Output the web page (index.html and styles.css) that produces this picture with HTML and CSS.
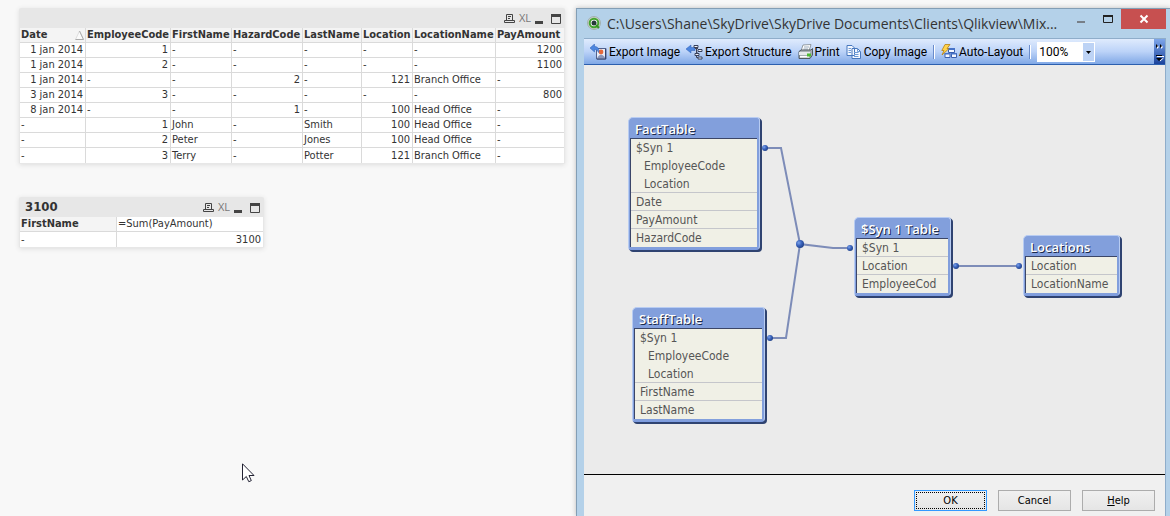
FILE: index.html
```
<!DOCTYPE html>
<html lang="en">
<head>
<meta charset="utf-8">
<title>Table Viewer</title>
<link rel="stylesheet" href="styles.css">
</head>
<body>
<svg class="defs" aria-hidden="true">
  <symbol id="print-small" viewBox="0 0 11 11"><path d="M2.500 7V1.500H8.500V7M4 3.500H7M4 5.500H6M.5 9.500V7.500H2.500M8.500 7.500H10.500V9.500H.5M2 7.500H9" fill="none" stroke="#444"/></symbol>
  <symbol id="minimise" viewBox="0 0 9 11"><path d="M0 8H8V11H0Z" fill="#444"/></symbol>
  <symbol id="maximise" viewBox="0 0 10 11"><path d="M.5 1.500H9.500V10.500H.5Z" fill="none" stroke="#444"/><path d="M0 1H10V4H0Z" fill="#444"/></symbol>
</svg>
<main class="screen">
  <section class="sheet">
    <article class="box">
      <header class="caption">
        <h2 class="caption-title"></h2>
        <button class="tool" aria-label="Print"><svg width="11" height="11"><use href="#print-small"/></svg></button>
        <button class="tool xl">XL</button>
        <button class="tool" aria-label="Minimise"><svg width="9" height="11"><use href="#minimise"/></svg></button>
        <button class="tool last" aria-label="Maximise"><svg width="10" height="11"><use href="#maximise"/></svg></button>
      </header>
      <table class="grid">
        <colgroup><col class="c-date"><col class="c-emp"><col class="c-first"><col class="c-haz"><col class="c-last"><col class="c-loc"><col class="c-locname"><col class="c-pay"></colgroup>
        <thead><tr><th><span class="sorted">Date<svg width="9" height="10" viewBox="0 0 9 10"><path d="M.5 9.500L4.500 1L8.500 9.500Z" fill="#fafafa" stroke="#ddd"/><path d="M4.500 1L8.500 9.500H.5" fill="none" stroke="#aaa"/></svg></span></th><th>EmployeeCode</th><th>FirstName</th><th>HazardCode</th><th>LastName</th><th>Location</th><th>LocationName</th><th>PayAmount</th></tr></thead>
        <tbody>
          <tr><td class="n">1 jan 2014</td><td class="n">1</td><td>-</td><td>-</td><td>-</td><td>-</td><td>-</td><td class="n">1200</td></tr>
          <tr><td class="n">1 jan 2014</td><td class="n">2</td><td>-</td><td>-</td><td>-</td><td>-</td><td>-</td><td class="n">1100</td></tr>
          <tr><td class="n">1 jan 2014</td><td>-</td><td>-</td><td class="n">2</td><td>-</td><td class="n">121</td><td>Branch Office</td><td>-</td></tr>
          <tr><td class="n">3 jan 2014</td><td class="n">3</td><td>-</td><td>-</td><td>-</td><td>-</td><td>-</td><td class="n">800</td></tr>
          <tr><td class="n">8 jan 2014</td><td>-</td><td>-</td><td class="n">1</td><td>-</td><td class="n">100</td><td>Head Office</td><td>-</td></tr>
          <tr><td>-</td><td class="n">1</td><td>John</td><td>-</td><td>Smith</td><td class="n">100</td><td>Head Office</td><td>-</td></tr>
          <tr><td>-</td><td class="n">2</td><td>Peter</td><td>-</td><td>Jones</td><td class="n">100</td><td>Head Office</td><td>-</td></tr>
          <tr><td>-</td><td class="n">3</td><td>Terry</td><td>-</td><td>Potter</td><td class="n">121</td><td>Branch Office</td><td>-</td></tr>
        </tbody>
      </table>
    </article>
    <article class="box box-small">
      <header class="caption">
        <h2 class="caption-title">3100</h2>
        <button class="tool" aria-label="Print"><svg width="11" height="11"><use href="#print-small"/></svg></button>
        <button class="tool xl">XL</button>
        <button class="tool" aria-label="Minimise"><svg width="9" height="11"><use href="#minimise"/></svg></button>
        <button class="tool last" aria-label="Maximise"><svg width="10" height="11"><use href="#maximise"/></svg></button>
      </header>
      <table class="grid">
        <colgroup><col class="c-key"><col></colgroup>
        <thead><tr><th>FirstName</th><th class="expr">=Sum(PayAmount)</th></tr></thead>
        <tbody><tr><td>-</td><td class="n">3100</td></tr></tbody>
      </table>
    </article>
    <svg class="pointer" width="13" height="20" viewBox="0 0 13 20"><path d="M.5 .8V17L4.300 13.500L6.800 18.700L9.300 17.600L7 12.500H12Z" fill="#fff" stroke="#223"/></svg>
  </section>

  <section class="dialog" role="dialog" aria-labelledby="dlg-title">
    <header class="titlebar">
      <svg class="app-icon" width="14" height="14" viewBox="0 0 14 14"><circle cx="7" cy="7" r="6.500" fill="#c9cfc6" stroke="#a2b0b0"/><circle cx="7" cy="7" r="4.300" fill="#fff" stroke="#44a52f" stroke-width="2"/><circle cx="7" cy="7" r="2.500" fill="#263a38"/><path d="M9 9L12 12" stroke="#36941f" stroke-width="2"/></svg>
      <h1 class="title" id="dlg-title">C:\Users\Shane\SkyDrive\SkyDrive Documents\Clients\Qlikview\Mix...</h1>
      <div class="window-buttons">
        <button class="wb" aria-label="Minimise"><svg width="10" height="10"><path d="M1 7H9V9H1Z" fill="#777f88"/></svg></button>
        <button class="wb" aria-label="Maximise"><svg width="10" height="10"><path d="M.5 1.500H9.500V8.500H.5Z" fill="none" stroke="#222"/><path d="M0 1H10V3H0Z" fill="#222"/></svg></button>
        <button class="wb close" aria-label="Close"><svg width="10" height="10"><path d="M1.500 1.500L8.500 8.500M8.500 1.500L1.500 8.500" stroke="#fff" stroke-width="2"/></svg></button>
      </div>
    </header>
    <div class="client">
      <div class="toolbar">
        <button class="cmd"><svg width="17" height="16" viewBox="0 0 17 16"><path d="M6.500 4.500H16V15H6.500Z" fill="#e9edf8" stroke="#52618d"/><circle cx="11" cy="8" r="2.400" fill="#e5683a"/><path d="M7 14.500C9 9.500 13 9.500 15.500 14.500Z" fill="#8a96ba"/><path d="M15.500 5V15H7" fill="none" stroke="#35456f"/><path d="M0 4L4.500 0V2.500C8 2.500 9.500 5 8.500 8.500C7.500 6.500 6.500 5.500 4.500 5.500V8Z" fill="#4d86df" stroke="#2a5db5" stroke-width=".5"/></svg>Export Image</button>
        <button class="cmd"><svg width="17" height="16" viewBox="0 0 17 16"><path d="M0 5L5 1V3.500H9V6.500H5V9Z" fill="#4d86df" stroke="#2a5db5" stroke-width=".5"/><path d="M9 4.500H12M10.500 4.500V13.500H12M10.500 9H12" fill="none" stroke="#445"/><path d="M8 1.500H12V3.500H8ZM12 5.500H16V7.500H12ZM9 9.500H13V11.500H9ZM12 13H16V15H12Z" fill="#f3f4f8" stroke="#37405c"/></svg>Export Structure</button>
        <button class="cmd"><svg width="15" height="15" viewBox="0 0 15 15"><path d="M5 1L13 .5L11 7H3Z" fill="#fff" stroke="#7c858c" stroke-width=".8"/><path d="M6 3H11M5.500 5H10" stroke="#9ab"/><path d="M1 7.500L3 6H13L14.500 4.500V11L12 14.500H1Z" fill="#a8afb4" stroke="#515a61"/><path d="M1 8H12V11H1Z" fill="#e6e9eb"/><path d="M2 12H11V13.500H2Z" fill="#fff"/><path d="M9 9.500H13V12.500H9Z" fill="#4dbb31"/></svg>Print</button>
        <button class="cmd"><svg width="16" height="14" viewBox="0 0 16 14"><path d="M1 .5H6L8.500 3V10.500H1ZM6 3.500H11.500L14.500 6.500V13.500H6Z" fill="#f4f8ff" stroke="#4777bd"/><path d="M2.500 3.500H5M2.500 5.500H5M2.500 7.500H5M8 7.500H12.500M8 9.500H12.500M8 11.500H12.500M11.500 4V6.500H14" fill="none" stroke="#6f9bd7"/></svg>Copy Image</button>
        <span class="rule"></span>
        <button class="cmd"><svg width="16" height="15" viewBox="0 0 16 15"><path d="M7.500 4.500H13.500V8.500H7.500ZM4 9.500H9V13.500H4ZM10.500 9.500H15.500V13.500H10.500Z" fill="#f5f8ff" stroke="#3a5faf"/><path d="M7 4H14V6H7ZM3.500 9H9.500V10.500H3.500ZM10 9H16V10.500H10Z" fill="#4773c8"/><path d="M4 .5H9L6 4.500H8L1 11L3 6.500H.8Z" fill="#ffd34d" stroke="#b68213" stroke-width=".8"/></svg>Auto-Layout</button>
        <span class="rule"></span>
        <span class="zoom"><select class="zoom-select" aria-label="Zoom"><option>100%</option></select><svg class="zoom-arrow" width="11" height="18"><path d="M3 8H8L5.500 11Z" fill="#000"/></svg></span>
        <button class="overflow" aria-label="More buttons"><svg width="11" height="24"><path d="M3 5L5 7L3 9ZM7 5L9 7L7 9Z" fill="#fff"/><path d="M2 4L4 6L2 8ZM6 4L8 6L6 8Z" fill="#000"/><path d="M3 16.500H10M6 21L9.500 18" stroke="#fff"/><path d="M2 15H8V16H2ZM2 18H8L5 21Z" fill="#000"/></svg></button>
      </div>
      <div class="canvas">
        <svg class="links" width="560" height="400" viewBox="584 65 560 400">
          <defs><radialGradient id="ball" cx="35%" cy="35%" r="70%"><stop offset="0" stop-color="#7ba2ea"/><stop offset=".5" stop-color="#3b64bd"/><stop offset="1" stop-color="#1e3f87"/></radialGradient></defs>
          <path d="M765 148H781L800 244L833 248H850M769 338H786L800 244M956 266H1019" fill="none" stroke="#7d8cb8" stroke-width="2"/>
          <g fill="url(#ball)"><circle cx="765" cy="148" r="3"/><circle cx="770" cy="338" r="3"/><circle cx="850" cy="248" r="3"/><circle cx="956" cy="266" r="3"/><circle cx="1019" cy="266" r="3"/><circle cx="800" cy="244" r="4"/></g>
        </svg>
        <div class="node node-fact"><h3 class="node-title">FactTable</h3><ul class="fields"><li class="open">$Syn 1</li><li class="sub open">EmployeeCode</li><li class="sub">Location</li><li>Date</li><li>PayAmount</li><li>HazardCode</li></ul></div>
        <div class="node node-staff"><h3 class="node-title">StaffTable</h3><ul class="fields"><li class="open">$Syn 1</li><li class="sub open">EmployeeCode</li><li class="sub">Location</li><li>FirstName</li><li>LastName</li></ul></div>
        <div class="node node-syn"><h3 class="node-title">$Syn 1 Table</h3><ul class="fields"><li>$Syn 1</li><li>Location</li><li>EmployeeCod</li></ul></div>
        <div class="node node-loc"><h3 class="node-title">Locations</h3><ul class="fields"><li>Location</li><li>LocationName</li></ul></div>
      </div>
      <footer class="actions">
        <button class="btn default"><span class="focus">OK</span></button>
        <button class="btn">Cancel</button>
        <button class="btn"><u>H</u>elp</button>
      </footer>
    </div>
  </section>
</main>
</body>
</html>
```
FILE: styles.css
```
* { box-sizing: border-box; }
body { margin: 0; background: #f8f8f8; color: #333; font: 11px/14px "DejaVu Sans Condensed", "DejaVu Sans", sans-serif; }
h1, h2, h3, ul { margin: 0; padding: 0; font-weight: normal; list-style: none; }
button { margin: 0; padding: 0; border: 0; background: none; color: inherit; font: inherit; }
svg { display: block; flex: none; }
.defs { position: absolute; width: 0; height: 0; }
.screen { display: grid; grid-template-columns: 576px minmax(0, 1fr); height: 100vh; overflow: hidden; }

.sheet { position: relative; padding: 8px 11px 0 19px; }
.box { border: 1px solid #e7e7e7; border-top: 0; border-radius: 2px; background: #e7e7e7; box-shadow: 0 1px 5px #ddd; }
.box-small { width: 245px; margin-top: 33px; }
.caption { display: flex; align-items: center; height: 20px; padding: 0 3px 0 5px; }
.caption-title { flex: 1; font-size: 13px; font-weight: bold; }
.tool { margin-right: 4px; }
.tool.last { margin: 0 0 0 3px; }
.xl { color: #777; font: 11px/14px "Open Sans", sans-serif; }
.grid { width: 100%; table-layout: fixed; border-collapse: separate; border-spacing: 0; background: #fff; }
.grid th, .grid td { height: 15px; padding: 0 1px; border-right: 1px solid #dadada; border-bottom: 1px solid #dadada; text-align: left; white-space: nowrap; line-height: 14px; }
.grid th { padding-right: 0; background: #f4f4f4; font-weight: bold; }
.grid .expr { background: #fff; font-weight: normal; }
.grid .n { padding-right: 2px; text-align: right; }
.grid th:last-child, .grid td:last-child { border-right: 0; }
.grid tbody tr:last-child td { border-bottom: 0; }
.sorted { display: flex; align-items: center; justify-content: space-between; padding-right: 1px; }
.c-date { width: 66px; }
.c-emp { width: 85px; }
.c-first { width: 61px; }
.c-haz { width: 71px; }
.c-last { width: 59px; }
.c-loc { width: 51px; }
.c-locname { width: 83px; }
.c-key { width: 97px; }
.pointer { position: absolute; left: 242px; top: 463px; }

.dialog { display: flex; flex-direction: column; margin-top: 8px; padding: 0 4px 0 7px; border: 1px solid #839eb5; border-width: 1px 0 0 1px; background: #b4d1e9; box-shadow: 0 0 5px #bbb; }
.titlebar { display: flex; height: 29px; padding-left: 3px; }
.app-icon { margin-top: 7px; }
.title { flex: 1; min-width: 0; padding-left: 6px; overflow: hidden; color: #333; font: 14px/29px "Open Sans", sans-serif; white-space: nowrap; }
.window-buttons { display: flex; align-items: flex-start; }
.wb { display: flex; align-items: center; justify-content: center; width: 27px; height: 20px; }
.close { width: 45px; background: #c75050; }
.client { display: flex; flex: 1; flex-direction: column; min-height: 0; border: 1px solid #8fadca; border-width: 1px 1px 0 0; background: #f0f0f0; }
.toolbar { display: flex; align-items: center; height: 26px; padding-left: 6px; border-bottom: 1px solid #2c5fae; background: linear-gradient(#dfebfd, #bcd3f8 50%, #80a8e6); color: #000; font: 12px/16px Roboto, sans-serif; }
.cmd { display: flex; align-items: center; gap: 2px; margin-right: 6px; white-space: nowrap; }
.rule { width: 2px; height: 14px; margin-right: 6px; border-left: 1px solid #6a8ccb; border-right: 1px solid #fff; }
.zoom { display: flex; width: 58px; height: 20px; border: 1px solid #fff; background: #fff; }
.zoom-select { flex: 1; min-width: 0; padding: 0 1px; border: 0; appearance: none; background: #fff; color: #000; font: inherit; }
.zoom-arrow { background: #bdd3f5; }
.overflow { display: flex; align-items: center; width: 11px; height: 25px; margin-left: auto; background: linear-gradient(#7ea6ea, #1a439c); }

.canvas { position: relative; flex: 1; min-height: 0; background: #ebebeb; border-bottom: 1px solid #000; }
.links { position: absolute; left: 0; top: 0; }
.node { position: absolute; border: 1px solid #b8ccf2; border-bottom-color: #7d9ce0; border-radius: 5px 3px 4px 3px; background: #829fdc; box-shadow: 1px 1px 0 #2f4371, 2px 2px 0 #2f4371; }
.node-title { height: 20px; padding-left: 6px; color: #fff; font: 600 13px/22px "Open Sans", sans-serif; text-shadow: 1px 1px 0 #1c2a4a; white-space: nowrap; }
.fields { margin: 0 2px 2px 1px; border: 1px solid #3b4668; border-width: 1px 0 0 1px; background: #f0f0e6; color: #555; font-size: 12px; line-height: 18px; }
.fields li { height: 18px; padding-left: 5px; border-bottom: 1px solid #c5c6cb; white-space: nowrap; }
.fields .open, .fields li:last-child { border-bottom-color: transparent; }
.fields .sub { padding-left: 13px; }
.node-fact { left: 44px; top: 52px; width: 132px; }
.node-staff { left: 48px; top: 242px; width: 133px; }
.node-syn { left: 270px; top: 152px; width: 97px; }
.node-loc { left: 439px; top: 170px; width: 97px; }

.actions { display: flex; justify-content: flex-end; gap: 11px; height: 41px; padding: 15px 10px 0 0; color: #000; }
.btn { width: 73px; height: 21px; padding: 1px; border: 1px solid #acacac; background: linear-gradient(#f0f0f0, #e5e5e5); }
.default { border-color: #3399ff; }
.focus { display: block; border: 1px dotted #000; line-height: 15px; }
```
